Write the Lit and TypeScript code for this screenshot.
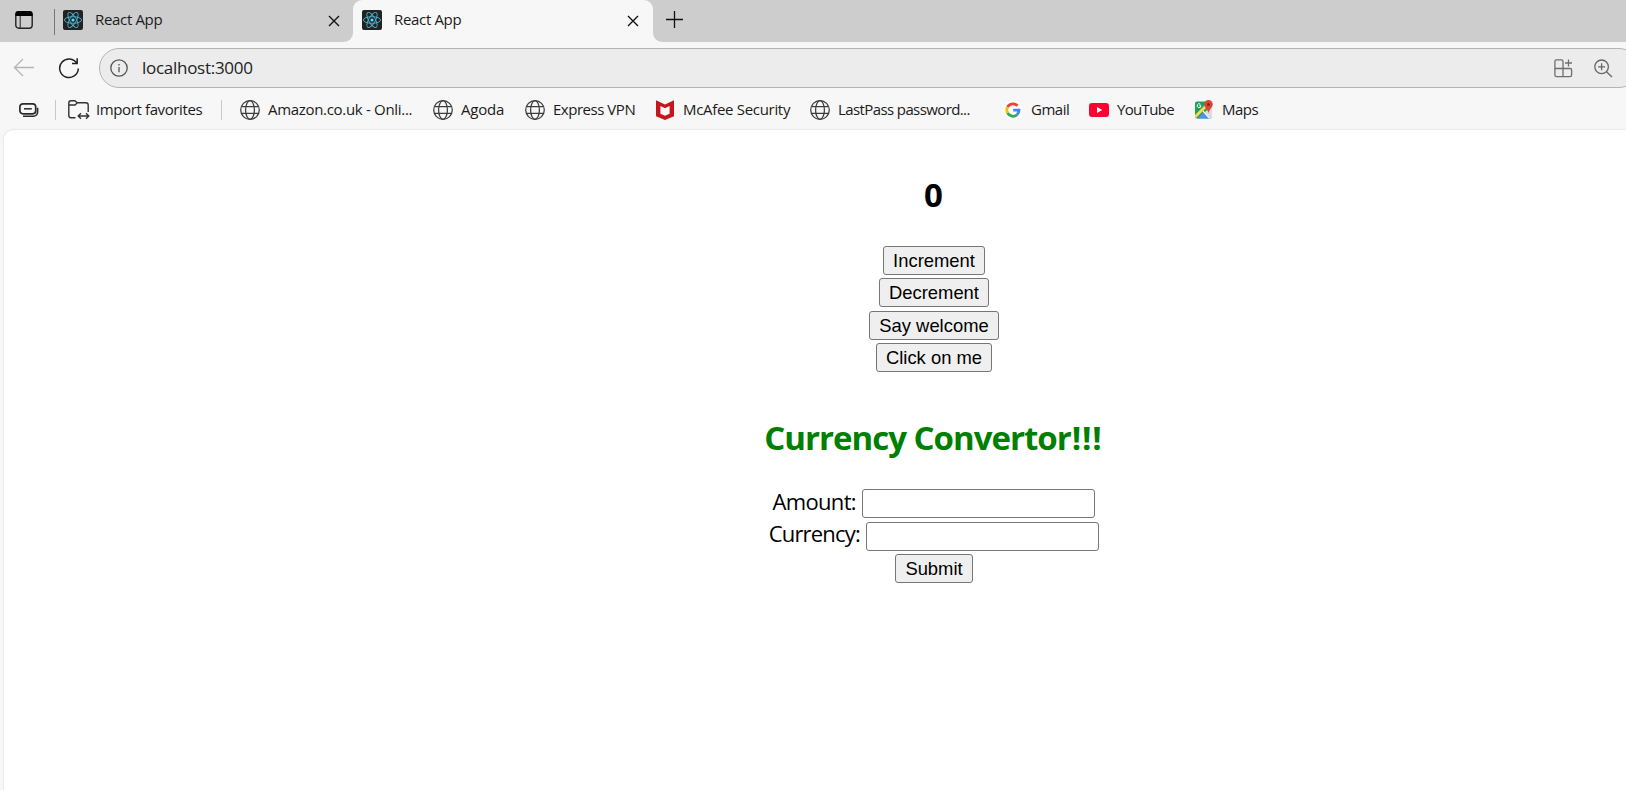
import { LitElement, html, css, svg } from "lit";
import { customElement } from "lit/decorators.js";

const globe = html`<svg width="20" height="20" viewBox="0 0 20 20" fill="none" stroke="#3c3c3c" stroke-width="1.25">
  <circle cx="10" cy="10" r="9.3"/><ellipse cx="10" cy="10" rx="4.4" ry="9.3"/><path d="M1.7 6.6h16.6M1.7 13.4h16.6"/></svg>`;

const mcafee = html`<svg width="20" height="20" viewBox="0 0 20 20">
  <path fill="#c5161d" fill-rule="evenodd" d="M1 0.3 10 4.5 19 .3V16.2L10 20 1 16.2ZM5.4 6.1V13.7L10 15.7 14.6 13.7V6.1L10 8.3Z"/></svg>`;

const google = html`<svg width="20" height="20" viewBox="0 0 20 20"><circle cx="10" cy="10" r="10" fill="#fff"/>
  <g fill="none" stroke-width="2.8"><path stroke="#ea4335" d="M4.6 7A6.1 6.1 0 0 1 14.5 5.8"/><path stroke="#fbbc05" d="M4.6 13A6.1 6.1 0 0 1 4.6 7"/>
  <path stroke="#34a853" d="M14 14.7A6.1 6.1 0 0 1 4.6 13"/><path stroke="#4285f4" d="M10.2 10.1H16A6 6 0 0 1 13.8 14.8"/></g></svg>`;

const youtube = html`<svg width="20" height="20" viewBox="0 0 20 20"><rect y="3" width="20" height="14" rx="3" fill="#ff0033"/><path fill="#fff" d="M8 7v6l5.2-3Z"/></svg>`;

const maps = html`<svg width="20" height="20" viewBox="0 0 20 20">
  <clipPath id="m"><rect x="1" y="1.5" width="17" height="17" rx="2"/></clipPath>
  <g clip-path="url(#m)"><path fill="#1fa15d" d="M1 1h17v18H1z"/><path fill="#dadce0" d="M18 5v14h-3l-5-6Z"/>
  <path fill="#5091f5" d="M3 19l7-7 7 7Z"/><path stroke="#ffd84d" stroke-width="2.8" d="M0 18 13 5"/><path stroke="#fff" stroke-width="1.2" d="M9 11l8 9"/></g>
  <path fill="none" stroke="#fff" stroke-width="1" d="M6.4 4.3a1.9 1.9 0 1 0 .6 1.5H5.3"/>
  <path fill="#dc4436" d="M14.5 0A4.3 4.3 0 0 0 10.2 4.3C10.2 8 14 9 14.5 13.6 15 9 18.8 8 18.8 4.3A4.3 4.3 0 0 0 14.5 0Z"/><circle cx="14.5" cy="4.4" r="1.5" fill="#80262e"/></svg>`;

const react = html`<svg width="20" height="20" viewBox="0 0 20 20"><rect width="20" height="20" rx="2" fill="#222"/>
  <circle cx="10" cy="10" r="1.6" fill="#61dafb"/><g fill="none" stroke="#4bb4d0" stroke-width=".9">
  ${[0, 60, 120].map((a) => svg`<ellipse cx="10" cy="10" rx="8.6" ry="3.3" transform="rotate(${a} 10 10)"/>`)}</g></svg>`;

const close = html`<svg width="12" height="12" viewBox="0 0 12 12" stroke="#111" stroke-width="1.4"><path d="M1 1l10 10M11 1 1 11"/></svg>`;

const favorites = [
  { icon: globe, text: "Amazon.co.uk - Onli...", cls: "amazon" },
  { icon: globe, text: "Agoda", cls: "agoda" },
  { icon: globe, text: "Express VPN", cls: "vpn" },
  { icon: mcafee, text: "McAfee Security", cls: "mcafee" },
  { icon: globe, text: "LastPass password...", cls: "lastpass" },
  { icon: google, text: "Gmail", cls: "gmail" },
  { icon: youtube, text: "YouTube", cls: "youtube" },
  { icon: maps, text: "Maps", cls: "maps" },
];

@customElement("app-root")
export class AppRoot extends LitElement {
  static styles = css`
    :host { display: flex; flex-direction: column; height: 790px; overflow: hidden; background: #f7f7f7; color: #1b1b1b; font-family: "Open Sans", "Noto Sans", sans-serif; font-size: 15px; }
    * { box-sizing: border-box; }
    svg { display: block; flex: none; }
    span { white-space: nowrap; flex: none; }
    .tabs { display: flex; height: 42px; flex: none; }
    .left { width: 353px; display: flex; background: #cdcdcd; border-bottom-right-radius: 9px; padding: 10px 12px 0 15px; }
    .sep { width: 1px; height: 26px; background: #777; margin: -1px 8px 0 21px; flex: none; }
    .title { line-height: 18px; margin-left: 12px; width: 233px; letter-spacing: -0.33px; }
    .x { margin-top: 5px; }
    .shoulder { width: 300px; background: linear-gradient(#cdcdcd 50%, #f7f7f7 50%); }
    .active { height: 42px; display: flex; background: #f7f7f7; border-radius: 9px 9px 0 0; padding: 10px 0 0 9px; }
    .rest { flex: 1; background: #cdcdcd; border-bottom-left-radius: 9px; padding: 11px 0 0 13px; }
    .toolbar { height: 46px; flex: none; display: flex; padding: 6px 0 0 13px; }
    .back { margin-top: 10px; }
    .reload { margin: 9px 0 0 23px; }
    .address { width: 1540px; flex: none; margin-left: 19px; height: 40px; border: 1px solid #b4b4b4; border-radius: 20px; background: #ececec; display: flex; align-items: center; padding-left: 10px; }
    .url { font-size: 17px; line-height: 38px; margin-left: 14px; width: 1412px; letter-spacing: -0.28px; color: #222; }
    .zoom { margin-left: 21px; }
    .favs { height: 42px; flex: none; display: flex; align-items: center; padding: 2px 0 0 19px; }
    .line { width: 1px; height: 20px; background: #c8c8c8; flex: none; }
    .a { margin: 0 12px 0 16px; }
    .b { margin-left: 18px; }
    .import { width: 107px; margin-left: 6px; letter-spacing: -0.38px; line-height: 20px; padding-bottom: 2px; }
    .list { display: grid; margin-left: 18px; grid-template-columns: 193px 92px 130px 155px 193px 86px 105px 90px; }
    .fav { display: flex; align-items: center; gap: 8px; line-height: 20px; }
    .fav span { padding-bottom: 2px; }
    .amazon, .mcafee { letter-spacing: -0.31px; }
    .agoda { letter-spacing: -0.2px; }
    .vpn { letter-spacing: -0.47px; }
    .lastpass { letter-spacing: -0.6px; }
    .gmail { letter-spacing: -0.5px; }
    .youtube { letter-spacing: -0.68px; }
    .maps { letter-spacing: -0.5px; }
    .page { margin-left: 4px; flex: 1; width: 1859px; background: #fff; border-radius: 9px 0 0 0; box-shadow: 0 0 2px #ccc; padding-top: 40px; text-align: center; color: #000; }
    h1 { font-size: 33px; line-height: 50px; margin: 0; font-weight: 700; }
    .counter { margin-top: 26px; height: 129px; display: flex; flex-direction: column; align-items: center; gap: 3.4px; }
    button { font-family: "Liberation Sans", Arial, sans-serif; font-size: 18.4px; line-height: 21px; height: 29px; border: 1px solid #767676; border-radius: 3px; background: #efefef; color: #000; padding: 0 0 0 1px; white-space: nowrap; }
    .b0 { width: 102px; } .b1 { width: 110px; } .b2 { width: 130px; } .b3 { width: 116px; }
    .green { color: #008000; margin-top: 38px; letter-spacing: -1px; }
    .bang { letter-spacing: 0.9px; margin-left: 1px; }
    form { display: flex; flex-direction: column; align-items: center; gap: 3.5px; margin-top: 26px; font-size: 22px; }
    label { display: flex; align-items: center; gap: 6px; height: 29px; }
    label span { line-height: 29px; padding-bottom: 5px; text-align: right; }
    .amount { width: 84px; letter-spacing: -0.65px; }
    .currency { width: 92px; letter-spacing: -0.8px; }
    input { width: 233px; height: 29px; border: 1px solid #767676; border-radius: 3px; background: #fff; padding: 0; margin: 0; }
    .submit { width: 78px; }
  `;
  render() {
    return html`
      <div class="tabs">
        <div class="left">
          <svg width="18" height="20" viewBox="0 0 18 20"><rect x=".8" y="1.8" width="16.4" height="16.4" rx="3" fill="none" stroke="#222" stroke-width="1.4"/><path d="M.5 6V4a3 3 0 0 1 3-3h11a3 3 0 0 1 3 3v2Z"/><path d="M5.2 6v12" stroke="#222"/></svg>
          <div class="sep"></div>${react}<span class="title">React App</span><div class="x">${close}</div>
        </div>
        <div class="shoulder"><div class="active">${react}<span class="title">React App</span><div class="x">${close}</div></div></div>
        <div class="rest"><svg width="18" height="18" viewBox="0 0 18 18" stroke="#111" stroke-width="1.3"><path d="M8.5 0v17M0 8.5h17"/></svg></div>
      </div>
      <div class="toolbar">
        <svg class="back" width="22" height="20" viewBox="0 0 22 20" fill="none" stroke="#b5b5b5" stroke-width="1.3"><path d="M21 9.5H2M10 1 1.5 9.5 10 18"/></svg>
        <svg class="reload" width="22" height="22" viewBox="0 0 22 22" fill="none" stroke="#222" stroke-width="1.5"><path d="M19 6.5A9.3 9.3 0 1 0 20.3 11.5M19.2 1.2V6.5H14"/></svg>
        <div class="address">
          <svg width="18" height="18" viewBox="0 0 18 18" fill="none" stroke="#555" stroke-width="1.3"><circle cx="9" cy="9" r="8.2"/><path d="M9 8v5.2M9 5v1.5"/></svg>
          <span class="url">localhost:3000</span>
          <svg width="19" height="19" viewBox="0 0 19 19" fill="none" stroke="#6e6e6e" stroke-width="1.3"><path d="M9 9.5V2.2A1.5 1.5 0 0 0 7.5.8H2.4A1.5 1.5 0 0 0 .9 2.2V16a1.6 1.6 0 0 0 1.6 1.6H16a1.6 1.6 0 0 0 1.6-1.6V11A1.5 1.5 0 0 0 16.1 9.5H1M9 9.5v8M14.5.5v7M11 4h7"/></svg>
          <svg class="zoom" width="19" height="19" viewBox="0 0 19 19" fill="none" stroke="#666" stroke-width="1.3"><circle cx="7.6" cy="7.8" r="6.8"/><path d="M12.5 12.7 18 18M7.6 4.3v7M4.1 7.8h7"/></svg>
        </div>
      </div>
      <div class="favs">
        <svg width="20" height="16" viewBox="0 0 20 16" fill="none" stroke="#2b2b2b"><path stroke-width="1.6" d="M4 14.2h10.4a4.2 4.2 0 0 0 4.2-4.2V5.8"/><rect x=".9" y="1.8" width="15.8" height="10" rx="3" stroke-width="1.7"/><path stroke-width="1.5" d="M5 6.8h7.8"/></svg>
        <div class="line a"></div>
        <svg class="folder" width="22" height="20" viewBox="0 0 22 20" fill="none" stroke="#333" stroke-width="1.4"><path d="M7.5 17.8H3A2.2 2.2 0 0 1 .8 15.6V3A2.2 2.2 0 0 1 3 .8H6.8L9.4 2.8H18A2.2 2.2 0 0 1 20.2 5v7M.8 5H7L9.4 2.8M10.5 16h10M13 13.2 10.2 16 13 18.8M18 13.2 20.8 16 18 18.8"/></svg>
        <span class="import">Import favorites</span>
        <div class="line b"></div>
        <div class="list">${favorites.map((f) => html`<div class="fav">${f.icon}<span class=${f.cls}>${f.text}</span></div>`)}</div>
      </div>
      <main class="page">
        <h1>0</h1>
        <div class="counter">${["Increment", "Decrement", "Say welcome", "Click on me"].map((t, i) => html`<button class="b${i}">${t}</button>`)}</div>
        <h1 class="green">Currency Convertor<span class="bang">!!!</span></h1>
        <form @submit=${(e: Event) => e.preventDefault()}>
          <label><span class="amount">Amount:</span><input type="text" /></label>
          <label><span class="currency">Currency:</span><input type="text" /></label>
          <button class="submit">Submit</button>
        </form>
      </main>`;
  }
}
